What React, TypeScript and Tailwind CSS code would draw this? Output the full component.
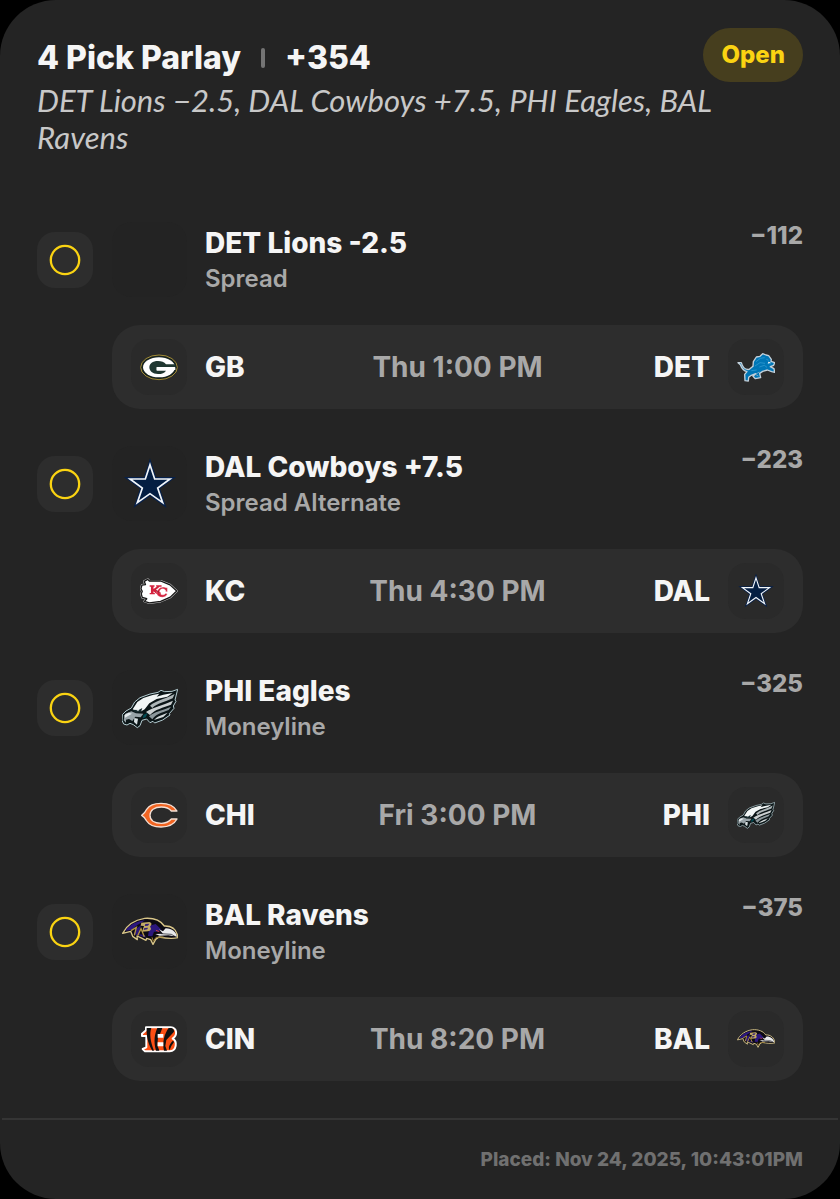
import type { ReactNode } from "react";

type LogoProps = { className?: string };

const STAR = "84,26 98,69 144,69 107,96 122,140 84,113 46,140 61,96 24,69 70,69";

function Cowboys({ className }: LogoProps) {
  return (
    <svg viewBox="0 0 168 168" className={className} aria-hidden="true">
      <polygon points={STAR} fill="#041e42" stroke="#06204a" strokeWidth="12" />
      <polygon points={STAR} fill="#041e42" stroke="#f2f6fa" strokeWidth="5" />
    </svg>
  );
}

function Eagles({ className }: LogoProps) {
  const outline =
    "M167 28 L150 34 L128 35 L117 31 L108 37 L84 42 L54 53 L38 66 L28 84 L12 93 L1 104 L0 121 L5 132 L15 135 L24 130 L34 134 L46 143 L54 137 L60 121 L74 117 L84 128 L93 124 L98 129 L122 120 L144 105 L142 101 L156 85 L154 78 L162 64 L159 60 Z";
  return (
    <svg viewBox="0 0 168 168" className={className} aria-hidden="true">
      <path d={outline} fill="#0b1517" stroke="#b5cdd2" strokeWidth="3" strokeLinejoin="round" />
      <path d="M36 82 L46 66 L64 54 L92 45 L112 41 L104 50 L124 44 L152 39 L136 50 L104 57 L82 70 L68 88 L58 94 L40 93 L32 88 Z" fill="#f2f6f6" />
      <path d="M84 77 C100 63 122 60 158 42 L152 55 C128 66 106 70 91 84 Z" fill="#aeb6b8" />
      <path d="M72 96 C94 80 124 76 153 62 L147 74 C124 83 98 88 84 105 Z" fill="#cbd0d1" />
      <path d="M81 109 C96 95 122 91 147 80 L140 90 C118 99 102 102 91 118 Z" fill="#8c979b" />
      <path d="M96 120 C106 108 122 104 137 98 L124 111 Z" fill="#d2d8d9" />
      <path d="M10 101 L28 94 L42 100 L64 101 L56 112 L40 110 L31 123 L21 117 L12 119 L12 128 L5 121 Z" fill="#98a3a8" />
      <path d="M7 105 L20 98 L30 101 L18 108 L8 114 Z" fill="#e3e9eb" />
      <path d="M37 114 L48 116 L45 134 L36 126 Z" fill="#d8e0e2" />
      <path d="M29 89 L50 90 L61 84 L57 96 L42 98 Z" fill="#14272b" />
      <path d="M43 91 L52 91 L48 94 Z" fill="#f2f6f6" />
      <path d="M65 104 L77 99 L71 112 L62 115 Z" fill="#004c54" />
    </svg>
  );
}

function Ravens({ className }: LogoProps) {
  return (
    <svg viewBox="0 0 168 168" className={className} aria-hidden="true">
      <path
        d="M2 88 C14 64 36 48 68 43 C96 41 116 50 127 66 C148 65 164 76 168 101 C150 105 132 103 111 99 L101 106 L93 121 L86 107 L74 103 L72 109 L56 101 L45 96 L46 107 L32 97 L26 82 Z"
        fill="#0c0a12"
        stroke="#d9c689"
        strokeWidth="4"
        strokeLinejoin="round"
      />
      <path d="M10 80 C24 61 46 51 69 49 C57 58 40 65 31 78 Z M35 91 L44 73 L57 64 L50 90 L69 94 L72 101 L51 94 Z M83 65 L101 60 L117 76 L108 83 L96 83 L91 97 L78 96 Z" fill="#2c177d" />
      <path d="M27 80 L43 70 L37 94 M47 95 L57 74 L67 98" fill="none" stroke="#b39543" strokeWidth="4" />
      <path d="M58 56 L82 54 Q94 57 84 68 Q92 78 78 82 L60 83 L66 66 L56 65 Z" fill="#c2aa66" />
      <path d="M70 60 L82 59 L78 65 L68 66 Z M67 72 L78 71 L76 76 L65 78 Z" fill="#342078" />
      <path d="M111 76 L123 82 L131 73 C151 73 162 84 165 98 L139 94 L113 95 L100 90 L123 89 Z" fill="#e9eaec" />
      <path d="M116 89 L148 91 L160 98 L123 98" fill="none" stroke="#090910" strokeWidth="2" />
      <path d="M102 79 L112 83" stroke="#c63b42" strokeWidth="3" />
      <path d="M90 100 L94 112 L102 100 L125 99" fill="none" stroke="#9e8033" strokeWidth="3" />
    </svg>
  );
}

function Packers({ className }: LogoProps) {
  return (
    <svg viewBox="0 0 114 114" className={className} aria-hidden="true">
      <ellipse cx="57" cy="58" rx="55" ry="37" fill="#18231f" stroke="#a38b36" strokeWidth="3" />
      <ellipse cx="57" cy="58" rx="48" ry="30" fill="#ffffff" />
      <path d="M106 49 H78 C73 42 64 39 54 39 C38 39 28 47 28 58 C28 69 38 78 54 78 C66 78 74 75 78 68 H50 V57 H106 Z" fill="#203731" />
      <path d="M50 58 H106 V66 H50 Z" fill="#ffffff" />
    </svg>
  );
}

function Lions({ className }: LogoProps) {
  return (
    <svg viewBox="0 0 114 114" className={className} aria-hidden="true">
      <path
        d="M3 44 L13 44 C17 59 26 66 37 64 L48 55 L49 41 L58 27 L69 25 L77 17 L87 21 L95 23 L103 34 L102 40 L113 44 L110 52 L100 56 L111 62 L113 73 L104 71 L91 66 L77 70 L68 76 L71 89 L55 92 L48 85 L56 77 L43 82 L35 88 L34 99 L24 98 L23 79 L30 71 C19 68 14 61 10 50 Z"
        fill="#0076b6"
        stroke="#c3d0da"
        strokeWidth="4"
        strokeLinejoin="round"
      />
      <path d="M57 41 L70 31 L83 29 M54 54 L69 44 L84 46 M67 57 L82 52 L90 58 M43 68 L59 66 M88 34 L95 37 M91 47 L102 47" fill="none" stroke="#39a1d6" strokeWidth="2" />
      <path d="M93 41 L102 43 L94 47 Z" fill="#edf4f8" />
      <path d="M67 72 L55 79 L64 84" fill="none" stroke="#a3bac9" strokeWidth="2" />
    </svg>
  );
}

function Chiefs({ className }: LogoProps) {
  const head = "M4 39 L15 37 L11 27 L22 21 L27 26 L62 26 L91 38 L112 57 L92 76 L62 89 L27 94 L12 89 L19 81 L5 77 L2 66 L5 58 L1 50 Z";
  return (
    <svg viewBox="-2 0 118 114" className={className} aria-hidden="true">
      <path d={head} fill="#ffffff" stroke="#c4c4c4" strokeWidth="7" strokeLinejoin="round" />
      <path d={head} fill="#ffffff" stroke="#171717" strokeWidth="4" strokeLinejoin="round" />
      <path d="M28 39 H43 V44 H40 V51 L51 43 H48 V39 H65 V44 H59 L47 54 L59 62 H63 V66 H49 L40 58 V63 H44 V67 H28 V63 H32 V44 H28 Z" fill="#d4213d" />
      <path d="M83 59 V47 H79 C71 43 62 45 56 51 C46 61 49 73 62 76 C71 78 80 73 83 66 L78 64 C72 72 61 70 59 61 C58 51 69 46 77 54 L78 59 Z" fill="#d4213d" stroke="#ffffff" strokeWidth="1" />
      <path d="M47 54 L59 62" stroke="#791426" strokeWidth="2" />
    </svg>
  );
}

function Bears({ className }: LogoProps) {
  return (
    <svg viewBox="0 0 114 114" className={className} aria-hidden="true">
      <path
        d="M5 58 Q15 51 20 40 C28 27 43 22 63 22 C87 22 103 31 111 45 L94 45 C87 36 78 33 64 33 C43 33 30 43 30 58 C30 73 43 82 64 82 C78 82 87 77 94 69 L111 69 C103 84 87 93 63 93 C43 93 28 88 20 75 Q15 64 5 58 Z"
        fill="#f26522"
        stroke="#f4dfd4"
        strokeWidth="4"
        strokeLinejoin="round"
      />
    </svg>
  );
}

function Bengals({ className }: LogoProps) {
  return (
    <svg viewBox="0 0 114 114" className={className} aria-hidden="true">
      <path
        d="M18 22 H92 C112 24 113 45 98 56 C113 64 110 93 89 94 H15 L8 87 L19 82 V48 H6 V41 L18 31 Z"
        fill="#fb4f14"
        stroke="#ffffff"
        strokeWidth="6"
        strokeLinejoin="round"
      />
      <path d="M20 24 H34 C28 41 31 65 42 92 H37 C22 69 19 43 20 24 Z M52 24 H67 L61 40 L54 52 L52 76 L58 92 L48 92 C40 65 44 41 52 24 Z M86 24 H94 Q103 27 102 35 L91 47 L79 60 L76 78 L81 92 H72 C66 67 73 42 86 24 Z M102 66 L94 78 L89 90 C83 82 90 70 99 62 Z" fill="#101010" />
      <path d="M53 42 H70 V53 H53 Z M53 67 H70 V79 H53 Z" fill="#ffffff" />
    </svg>
  );
}

type Team = { code: string; logo: ReactNode };
type Leg = {
  title: string;
  market: string;
  odds: string;
  time: string;
  logo: ReactNode;
  away: Team;
  home: Team;
};

const large = "size-14";
const small = "size-[38px]";

const legs: Leg[] = [
  {
    title: "DET Lions -2.5",
    market: "Spread",
    odds: "−112",
    time: "Thu 1:00 PM",
    logo: null,
    away: { code: "GB", logo: <Packers className={small} /> },
    home: { code: "DET", logo: <Lions className={small} /> },
  },
  {
    title: "DAL Cowboys +7.5",
    market: "Spread Alternate",
    odds: "−223",
    time: "Thu 4:30 PM",
    logo: <Cowboys className={large} />,
    away: { code: "KC", logo: <Chiefs className={small} /> },
    home: { code: "DAL", logo: <Cowboys className={small} /> },
  },
  {
    title: "PHI Eagles",
    market: "Moneyline",
    odds: "−325",
    time: "Fri 3:00 PM",
    logo: <Eagles className={large} />,
    away: { code: "CHI", logo: <Bears className={small} /> },
    home: { code: "PHI", logo: <Eagles className={small} /> },
  },
  {
    title: "BAL Ravens",
    market: "Moneyline",
    odds: "−375",
    time: "Thu 8:20 PM",
    logo: <Ravens className={large} />,
    away: { code: "CIN", logo: <Bengals className={small} /> },
    home: { code: "BAL", logo: <Ravens className={small} /> },
  },
];

function TeamTile({ children }: { children: ReactNode }) {
  return (
    <span className="flex size-14 shrink-0 items-center justify-center rounded-[18px] bg-[#2a2a2a]">
      {children}
    </span>
  );
}

function LegItem({ leg }: { leg: Leg }) {
  return (
    <li>
      <div className="flex items-center">
        <span className="mr-[19px] flex size-14 shrink-0 items-center justify-center rounded-[18px] bg-[#2d2d2d]">
          <svg viewBox="0 0 32 32" className="size-8" aria-hidden="true">
            <circle cx="16" cy="16" r="14.2" fill="none" stroke="#fad312" strokeWidth="2.3" />
          </svg>
        </span>
        <span className="mr-[18px] flex size-[75px] shrink-0 items-center justify-center rounded-[20px] bg-[#232323]">
          {leg.logo}
        </span>
        <div className="min-w-0 flex-1 self-end">
          <h2 className="text-[28px] leading-9 font-extrabold text-[#f5f5f5]">{leg.title}</h2>
          <p className="text-2xl leading-9 font-semibold text-[#a8a8a8]">{leg.market}</p>
        </div>
        <span className="self-start text-2xl leading-7 font-extrabold text-[#a8a8a8]">{leg.odds}</span>
      </div>
      <div className="mt-7 ml-[75px] grid grid-cols-[1fr_auto_1fr] items-center rounded-[28px] bg-[#2d2d2d] px-[19px] py-3.5 text-[28px] leading-9 font-extrabold text-[#f5f5f5]">
        <div className="flex items-center gap-[18px]">
          <TeamTile>{leg.away.logo}</TeamTile>
          {leg.away.code}
        </div>
        <time className="font-bold text-[#a8a8a8]">{leg.time}</time>
        <div className="flex items-center justify-end gap-[18px]">
          {leg.home.code}
          <TeamTile>{leg.home.logo}</TeamTile>
        </div>
      </div>
    </li>
  );
}

export default function App() {
  return (
    <div className="min-h-screen bg-black font-['Inter',sans-serif]">
      <main className="flex min-h-screen flex-col rounded-[56px] bg-[#242424]">
        <header className="px-[37px] pt-7">
          <div className="flex items-end justify-between">
            <div className="flex items-center gap-5 text-[32px] leading-[48px] font-extrabold text-[#f5f5f5]">
              <h1>4 Pick Parlay</h1>
              <span className="h-5 w-1 rounded-full bg-[#747474]" />
              <span>+354</span>
            </div>
            <span className="rounded-full bg-[#463e1e] px-[18px] py-[9px] text-2xl leading-9 font-extrabold text-[#fad312]">
              Open
            </span>
          </div>
          <p className="font-['Lato',cursive] text-[31px] leading-[37px] text-[#c8c8c8] italic">
            DET Lions −2.5, DAL Cowboys +7.5, PHI Eagles, BAL Ravens
          </p>
        </header>
        <ul className="mt-[66px] flex flex-col gap-[37px] px-[37px] pb-[37px]">
          {legs.map((leg) => (
            <LegItem key={leg.title} leg={leg} />
          ))}
        </ul>
        <footer className="mx-0.5 mt-auto border-t-2 border-[#353535] px-[35px] pt-[26px] pb-[25px] text-right text-[19px] leading-7 font-extrabold text-[#707070]">
          Placed: Nov 24, 2025, 10:43:01PM
        </footer>
      </main>
    </div>
  );
}
